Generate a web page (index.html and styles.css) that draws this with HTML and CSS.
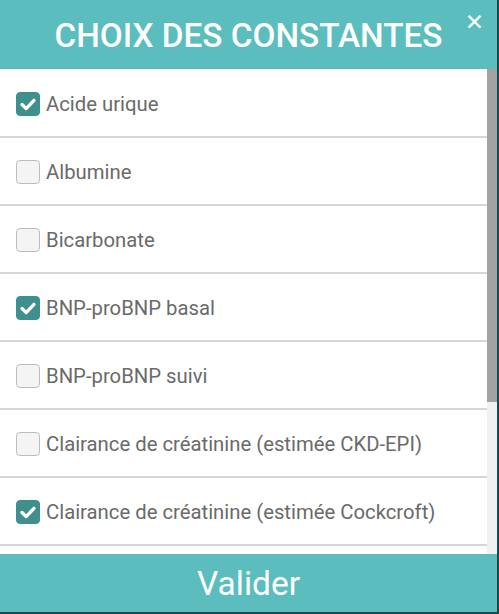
FILE: index.html
```html
<!DOCTYPE html>
<html lang="fr">
<head>
<meta charset="utf-8">
<title>Choix des constantes</title>
<link rel="stylesheet" href="styles.css">
</head>
<body>
<div class="modal">
  <header class="modal-header">
    <h1 class="modal-title">CHOIX DES CONSTANTES</h1>
    <span class="modal-close">&#x2715;</span>
  </header>
  <div class="modal-body">
    <ul class="list">
      <li class="row"><span class="box checked"><svg viewBox="0 0 24 24"><path d="M5.5 12.5l4.5 4.5 8.5-9" /></svg></span><span class="label">Acide urique</span></li>
      <li class="row"><span class="box"></span><span class="label">Albumine</span></li>
      <li class="row"><span class="box"></span><span class="label">Bicarbonate</span></li>
      <li class="row"><span class="box checked"><svg viewBox="0 0 24 24"><path d="M5.5 12.5l4.5 4.5 8.5-9" /></svg></span><span class="label">BNP-proBNP basal</span></li>
      <li class="row"><span class="box"></span><span class="label">BNP-proBNP suivi</span></li>
      <li class="row"><span class="box"></span><span class="label">Clairance de créatinine (estimée CKD-EPI)</span></li>
      <li class="row"><span class="box checked"><svg viewBox="0 0 24 24"><path d="M5.5 12.5l4.5 4.5 8.5-9" /></svg></span><span class="label">Clairance de créatinine (estimée Cockcroft)</span></li>
      <li class="row"></li>
    </ul>
    <div class="scrollbar"><div class="thumb"></div></div>
  </div>
  <button class="validate">Valider</button>
</div>
</body>
</html>
```
FILE: styles.css
```css
html, body {
  margin: 0;
  padding: 0;
  background: #ffffff;
}
.modal {
  width: 499px;
  height: 614px;
  box-sizing: border-box;
  border-right: 2px solid #1b4a4d;
  border-bottom: 2px solid #1b4a4d;
  display: flex;
  flex-direction: column;
  font-family: Roboto, "Liberation Sans", sans-serif;
  overflow: hidden;
}
.modal-header {
  position: relative;
  height: 69px;
  flex: none;
  background: #5bbdbd;
  display: flex;
  align-items: center;
  justify-content: center;
}
.modal-title {
  margin: 0;
  color: #ffffff;
  font-size: 33.3px;
  font-weight: 500;
  padding-top: 1px;
}
.modal-close {
  position: absolute;
  top: 8px;
  right: 13px;
  color: #ffffff;
  font-size: 23px;
  font-weight: 700;
  line-height: 28px;
  font-family: "DejaVu Sans", sans-serif;
}
.modal-body {
  flex: 1;
  display: flex;
  min-height: 0;
}
.list {
  flex: 1;
  list-style: none;
  margin: 0;
  padding: 1px 0 0;
  overflow: hidden;
}
.row {
  height: 68px;
  box-sizing: border-box;
  border-bottom: 2px solid #d6d6d6;
  display: flex;
  align-items: center;
  padding-left: 16px;
  padding-top: 1px;
}
.box {
  width: 24px;
  height: 24px;
  box-sizing: border-box;
  border-radius: 4px;
  border: 1px solid #bdbdbd;
  background: #f4f4f4;
  flex: none;
  margin-right: 6px;
  display: flex;
  align-items: center;
  justify-content: center;
}
.box.checked {
  background: #3f8f8f;
  border-color: #3f8f8f;
}
.box svg {
  width: 24px;
  height: 24px;
  fill: none;
  stroke: #ffffff;
  stroke-width: 3.6;
  stroke-linecap: round;
  stroke-linejoin: round;
}
.label {
  color: #6a6a6a;
  font-size: 20.3px;
}
.scrollbar {
  width: 10px;
  flex: none;
  background: #f1f1f1;
}
.thumb {
  height: 333px;
  background: #a3a3a3;
}
.validate {
  height: 58px;
  flex: none;
  border: none;
  margin: 0;
  padding: 0;
  background: #5bbdbd;
  color: #ffffff;
  font-family: Roboto, "Liberation Sans", sans-serif;
  font-size: 33.5px;
  font-weight: 400;
  cursor: pointer;
}
```
